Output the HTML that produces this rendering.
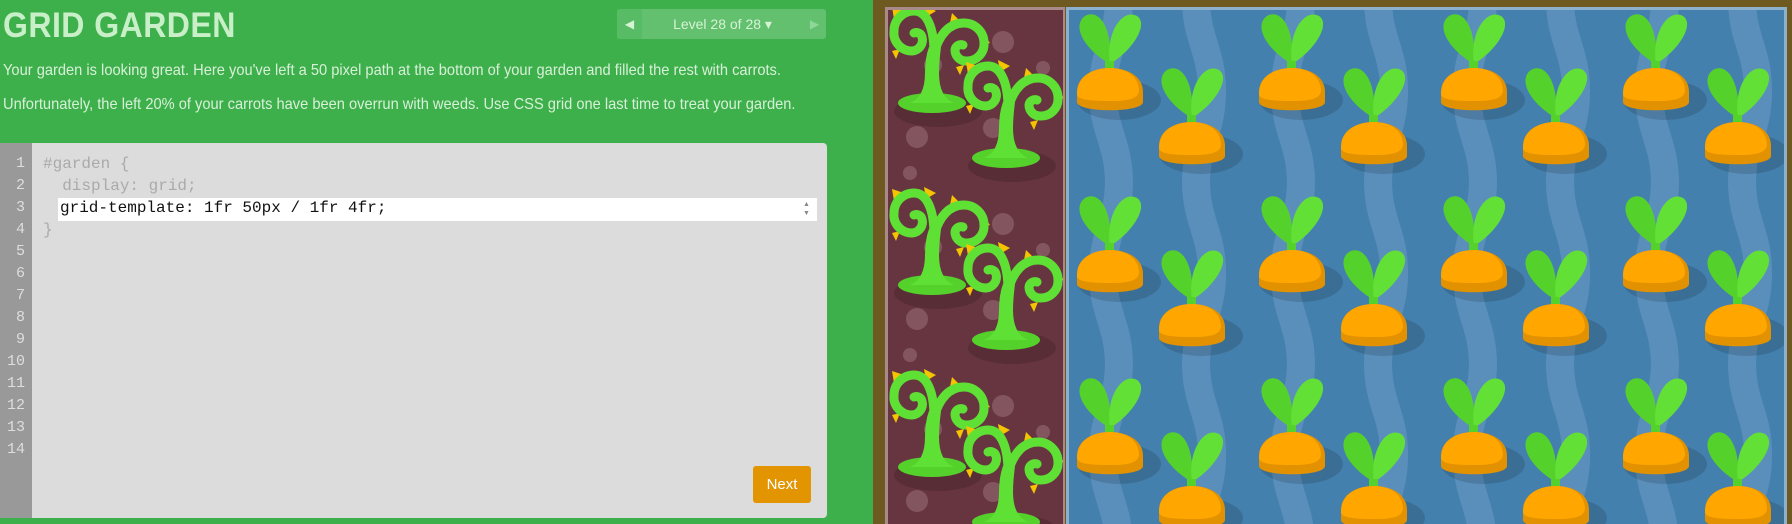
<!DOCTYPE html>
<html><head><meta charset="utf-8"><style>
*{margin:0;padding:0;box-sizing:border-box}
body{width:1792px;height:524px;overflow:hidden;background:#3db04c;position:relative;font-family:"Liberation Sans",sans-serif}
.title{position:absolute;left:3px;top:8px;font-size:35px;font-weight:bold;color:#c8efc8;letter-spacing:0.5px;transform:scaleX(0.915);transform-origin:left top;line-height:36px}
.nav{position:absolute;left:617px;top:9px;width:209px;height:30px;background:#62c06e;border-radius:3px;color:#d6f3d6;font-size:14px}
.nav .l{position:absolute;left:0;top:0;width:25px;height:30px;background:#58bb65;border-radius:3px 0 0 3px;text-align:center;line-height:30px;font-size:12px}
.nav .r{position:absolute;right:0;top:0;width:23px;height:30px;text-align:center;line-height:30px;font-size:12px;color:#8fd69a}
.nav .m{position:absolute;left:25px;right:23px;top:0;text-align:center;line-height:30px}
p{position:absolute;left:3px;color:#d8f0d8;font-size:15.6px;white-space:nowrap;transform:scaleX(0.94);transform-origin:left top}
.ed{position:absolute;left:0;top:143px;width:827px;height:375px;background:#dcdcdc;border-radius:0 4px 4px 0}
.gut{position:absolute;left:0;top:0;width:32px;height:375px;background:#999}
.ln{position:absolute;left:0;width:25px;text-align:right;color:#dedede;font-family:"Liberation Mono",monospace;font-size:15px}
.code{position:absolute;font-family:"Liberation Mono",monospace;font-size:16px;color:#aaa;white-space:pre}
.hl{position:absolute;left:58px;top:55px;width:759px;height:23px;background:#fff}
.next{position:absolute;left:753px;top:466px;width:58px;height:37px;background:#e29500;border-radius:3px;color:#fff;font-size:15px;text-align:center;line-height:37px}
svg{position:absolute;left:0;top:0}
</style></head><body>
<div class="title">GRID GARDEN</div>
<div class="nav"><div class="l">◀</div><div class="m">Level 28 of 28 ▾</div><div class="r">▶</div></div>
<p style="top:62px">Your garden is looking great. Here you've left a 50 pixel path at the bottom of your garden and filled the rest with carrots.</p>
<p style="top:96px">Unfortunately, the left 20% of your carrots have been overrun with weeds. Use CSS grid one last time to treat your garden.</p>
<div class="ed">
<div class="gut"></div>
<div class="hl"></div>
<div class="ln" style="top:12px">1</div><div class="ln" style="top:34px">2</div><div class="ln" style="top:56px">3</div><div class="ln" style="top:78px">4</div><div class="ln" style="top:100px">5</div><div class="ln" style="top:122px">6</div><div class="ln" style="top:144px">7</div><div class="ln" style="top:166px">8</div><div class="ln" style="top:188px">9</div><div class="ln" style="top:210px">10</div><div class="ln" style="top:232px">11</div><div class="ln" style="top:254px">12</div><div class="ln" style="top:276px">13</div><div class="ln" style="top:298px">14</div>
<div class="code" style="left:43px;top:12px">#garden {</div>
<div class="code" style="left:43px;top:34px">  display: grid;</div>
<div class="code" style="left:60px;top:56px;color:#111">grid-template: 1fr 50px / 1fr 4fr;</div>
<div class="code" style="left:43px;top:78px">}</div>
<div style="position:absolute;left:803px;top:57px;font-size:7px;color:#888;line-height:9px">▲<br>▼</div>
</div>
<div class="next">Next</div>

<svg width="1792" height="524" viewBox="0 0 1792 524" style="left:0;top:0">
<defs>
<g id="carrot">
<ellipse cx="42" cy="32" rx="42" ry="20" fill="#000" opacity="0.14"/>
<path d="M33,-4 C8,-18 -6,-42 8,-52 C22,-60 36,-40 33,-4Z" fill="#55d12b"/>
<path d="M33,-4 C28,-36 46,-60 60,-52 C72,-44 56,-18 33,-4Z" fill="#62e036"/>
<rect x="28" y="-7" width="9" height="12" fill="#55d12b"/>
<path d="M0,34 L0,24 C0,8 16,0 33,0 C50,0 66,8 66,24 L66,34 C66,45 0,45 0,34Z" fill="#e29100"/>
<path d="M0,26 C0,8 16,0 33,0 C48,0 61,7 62,22 C62,32 48,33 33,33 C15,33 0,32 0,26Z" fill="#ffa600"/>
</g>
<pattern id="cp" patternUnits="userSpaceOnUse" x="1066" y="0" width="182" height="182">
<rect width="182" height="182" fill="#4480ad"/>
<path d="M53,-2 C53,40 37,50 37,91 C37,132 53,142 53,184" stroke="#5b8fbb" stroke-width="28" fill="none"/>
<path d="M130,-2 C130,40 146,50 146,91 C146,132 130,142 130,184" stroke="#5b8fbb" stroke-width="28" fill="none"/>
<use href="#carrot" x="11" y="68"/>
<use href="#carrot" x="93" y="122"/>
<use href="#carrot" x="93" y="-60"/>
</pattern>
<g id="weed">
<ellipse cx="6" cy="8" rx="44" ry="16" fill="#000" opacity="0.15"/>
<ellipse cx="0" cy="0" rx="34" ry="10" fill="#55d12b"/>
<path d="M-22,0 Q-7,-6 -7,-30 Q-7,-45 -3,-56 L9,-56 Q7,-40 7,-30 Q7,-6 22,0Z" fill="#5ee035"/>
<g fill="#f5c400">
<path d="M-40,-96 L-28,-92 -38,-84Z"/><path d="M-8,-98 L4,-92 -6,-86Z"/><path d="M20,-90 L28,-82 18,-80Z"/>
<path d="M52,-68 L58,-60 50,-58Z"/><path d="M24,-36 L32,-38 28,-28Z"/><path d="M-40,-52 L-32,-54 -36,-44Z"/>
</g>
<g stroke="#5ee035" stroke-width="9" fill="none" stroke-linecap="round">
<path d="M2,-50 C2,-75 -5,-92 -18,-92 A20,20 0 0 0 -38,-72 A18,18 0 0 0 -20,-52 A11,11 0 0 0 -10,-66 A6,6 0 0 0 -18,-70"/>
<path d="M2,-50 C8,-70 18,-80 32,-80 A20,20 0 0 1 52,-60 A17,17 0 0 1 34,-42 A11,11 0 0 1 23,-53 A6,6 0 0 1 31,-58"/>
</g>
</g>
<pattern id="wp" patternUnits="userSpaceOnUse" x="888" y="0" width="175" height="182">
<rect width="175" height="182" fill="#673540"/>
<g fill="#8a5d66" opacity="0.8">
<circle cx="115" cy="42" r="11"/><circle cx="155" cy="68" r="7"/><circle cx="29" cy="137" r="11"/><circle cx="22" cy="173" r="7"/><circle cx="45" cy="65" r="9"/><circle cx="105" cy="128" r="10"/>
</g>
<use href="#weed" x="44" y="103"/>
<use href="#weed" x="118" y="158"/>
<use href="#weed" x="118" y="-24"/>
</pattern>
</defs>
<rect x="873" y="0" width="919" height="524" fill="#6e5a20"/>
<rect x="885" y="7" width="180" height="517" fill="#a98a8a"/>
<rect x="888" y="10" width="175" height="514" fill="url(#wp)"/>
<rect x="1066" y="7" width="721" height="517" fill="#8db0cc"/>
<rect x="1069" y="10" width="715" height="514" fill="url(#cp)"/>
</svg>
</body></html>
